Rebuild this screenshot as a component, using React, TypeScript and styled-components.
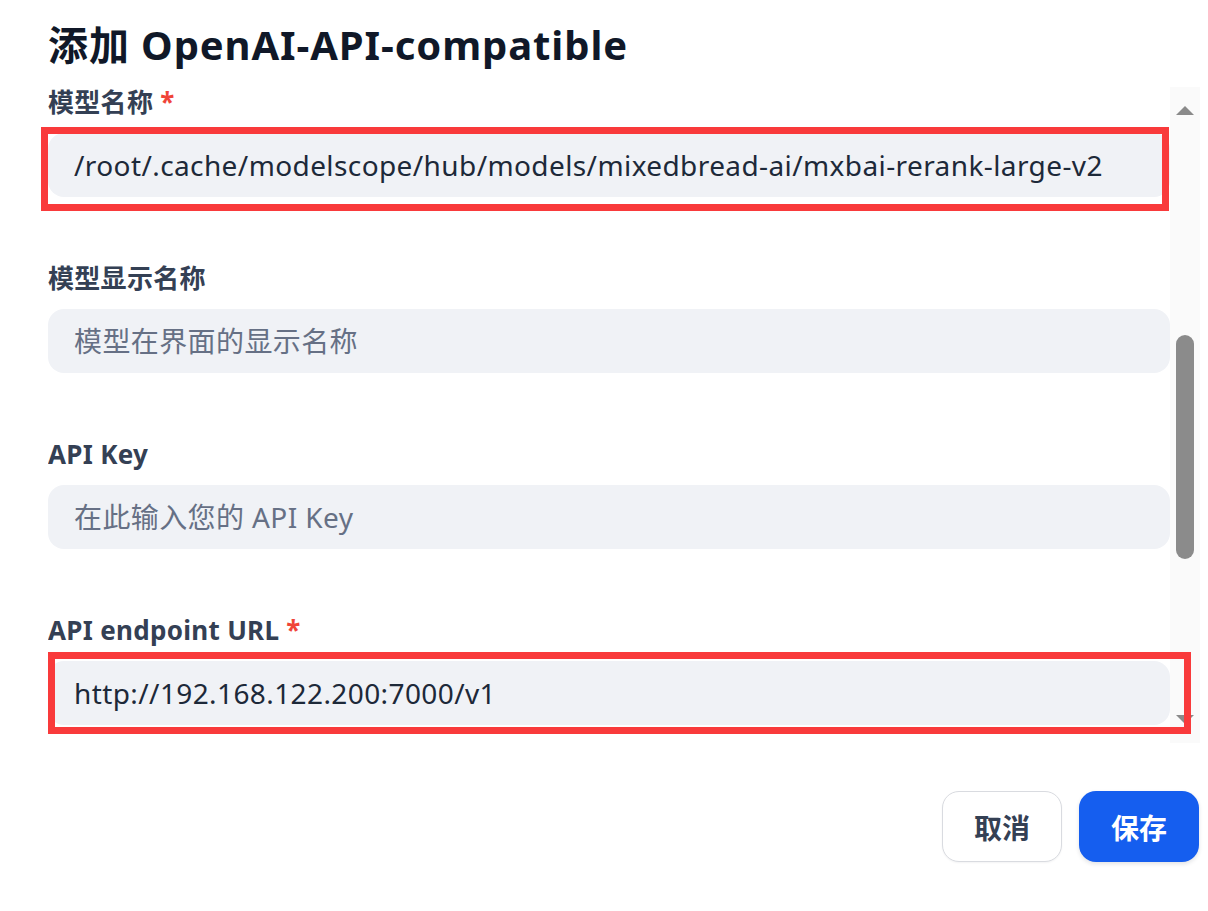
import React from 'react'
import styled, { createGlobalStyle } from 'styled-components'

const GlobalStyle = createGlobalStyle`
  html, body {
    margin: 0;
    padding: 0;
    background: #fff;
  }

  body {
    font-family: 'Noto Sans', 'Noto Sans CJK SC', sans-serif;
  }

  * {
    box-sizing: border-box;
  }
`

type FieldDef = {
  label: string
  required?: boolean
  value?: string
  placeholder?: string
}

const fields: FieldDef[] = [
  {
    label: '模型名称',
    required: true,
    value: '/root/.cache/modelscope/hub/models/mixedbread-ai/mxbai-rerank-large-v2',
  },
  { label: '模型显示名称', placeholder: '模型在界面的显示名称' },
  { label: 'API Key', placeholder: '在此输入您的 API Key' },
  { label: 'API endpoint URL', required: true, value: 'http://192.168.122.200:7000/v1' },
]

const App: React.FC = () => {
  return (
    <>
      <GlobalStyle />
      <Page>
        <Title>添加 OpenAI-API-compatible</Title>

        <Body>
          <Content>
            {fields.map((f) => (
              <Field key={f.label}>
                <Label>
                  {f.label}
                  {f.required && <Required> *</Required>}
                </Label>
                <Input defaultValue={f.value} placeholder={f.placeholder} readOnly />
              </Field>
            ))}
          </Content>

          <Scrollbar>
            <ArrowUp />
            <Thumb />
            <ArrowDown />
          </Scrollbar>
        </Body>

        <Footer>
          <CancelButton>取消</CancelButton>
          <SaveButton>保存</SaveButton>
        </Footer>

        <Highlight $left={41} $top={127} $width={1128} $height={84} />
        <Highlight $left={48} $top={652} $width={1143} $height={82} />
      </Page>
    </>
  )
}

const Page = styled.div`
  position: relative;
  width: 1208px;
  height: 911px;
  padding: 20px 8px 0 48px;
  display: flex;
  flex-direction: column;
  overflow: hidden;
`

const Title = styled.h2`
  margin: 0;
  font-size: 40px;
  line-height: 50px;
  font-weight: 700;
  color: #101828;
  letter-spacing: 0.9px;
`

const Body = styled.div`
  display: flex;
  height: 659px;
  margin-top: 14px;
`

const Content = styled.div`
  flex: 1;
  overflow: hidden;
`

const Field = styled.div`
  display: flex;
  flex-direction: column;

  & + & {
    margin-top: 63px;
  }
`

const Label = styled.label`
  font-size: 26px;
  line-height: 36px;
  font-weight: 700;
  color: #344054;
  letter-spacing: 0.3px;
  margin-bottom: 13px;
`

const Required = styled.span`
  color: #f04438;
`

const Input = styled.input`
  height: 64px;
  width: 100%;
  border: none;
  outline: none;
  border-radius: 16px;
  background: #f0f2f6;
  padding: 0 26px;
  font-family: 'Noto Sans', 'Noto Sans CJK SC', sans-serif;
  font-size: 28px;
  letter-spacing: 0.4px;
  color: #1d2939;

  &::placeholder {
    color: #667085;
  }
`

const Scrollbar = styled.div`
  width: 30px;
  margin-top: 3px;
  background: #fafafa;
  display: flex;
  flex-direction: column;
  align-items: center;
  padding-top: 19px;
`

const ArrowUp = styled.div`
  width: 0;
  height: 0;
  border-left: 9px solid transparent;
  border-right: 9px solid transparent;
  border-bottom: 9px solid #8a8a8a;
`

const Thumb = styled.div`
  width: 18px;
  height: 224px;
  margin-top: 220px;
  border-radius: 9px;
  background: #8b8b8b;
`

const ArrowDown = styled.div`
  width: 0;
  height: 0;
  margin-top: 156px;
  border-left: 9px solid transparent;
  border-right: 9px solid transparent;
  border-top: 9px solid #8a8a8a;
`

const Footer = styled.div`
  display: flex;
  justify-content: flex-end;
  gap: 17px;
  margin-top: 48px;
  padding-right: 1px;
`

const Button = styled.button`
  width: 120px;
  height: 71px;
  border-radius: 17px;
  font-family: 'Noto Sans', 'Noto Sans CJK SC', sans-serif;
  font-size: 28px;
  font-weight: 700;
  cursor: pointer;
`

const CancelButton = styled(Button)`
  background: #fff;
  color: #344054;
  border: 1px solid #d9dbe0;
  box-shadow: 0 1px 2px rgba(16, 24, 40, 0.05);
`

const SaveButton = styled(Button)`
  background: #155eef;
  color: #fff;
  border: none;
  box-shadow: 0 2px 4px rgba(16, 24, 40, 0.12);
`

const Highlight = styled.div<{ $left: number; $top: number; $width: number; $height: number }>`
  position: absolute;
  left: ${(p) => p.$left}px;
  top: ${(p) => p.$top}px;
  width: ${(p) => p.$width}px;
  height: ${(p) => p.$height}px;
  border: 7px solid #f93a3b;
  pointer-events: none;
`

export default App
